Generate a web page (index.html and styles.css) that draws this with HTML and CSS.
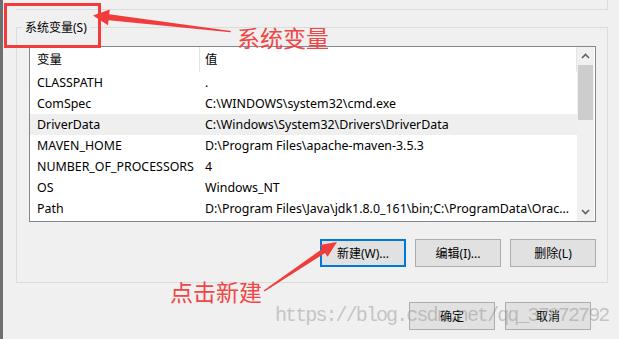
FILE: index.html
```html
<!DOCTYPE html>
<html lang="zh-CN">

<head>
    <meta charset="UTF-8">
    <meta name="viewport" content="width=device-width, initial-scale=1.0">
    <title>环境变量</title>
    <link rel="stylesheet" href="styles.css">
</head>

<body>
    <div class="screen">
        <div class="prev-group"></div>

        <fieldset class="group">
            <legend>系统变量(S)</legend>

            <div class="listbox">
                <div class="table">
                    <div class="row head"><span class="c1">变量</span><span class="c2">值</span></div>
                    <div class="row"><span class="c1">CLASSPATH</span><span class="c2">.</span></div>
                    <div class="row"><span class="c1">ComSpec</span><span class="c2">C:\WINDOWS\system32\cmd.exe</span></div>
                    <div class="row sel"><span class="c1">DriverData</span><span class="c2">C:\Windows\System32\Drivers\DriverData</span></div>
                    <div class="row"><span class="c1">MAVEN_HOME</span><span class="c2">D:\Program Files\apache-maven-3.5.3</span></div>
                    <div class="row"><span class="c1">NUMBER_OF_PROCESSORS</span><span class="c2">4</span></div>
                    <div class="row"><span class="c1">OS</span><span class="c2">Windows_NT</span></div>
                    <div class="row"><span class="c1">Path</span><span class="c2">D:\Program Files\Java\jdk1.8.0_161\bin;C:\ProgramData\Oracle\Java\javapath</span></div>
                </div>
                <div class="scrollbar">
                    <div class="sb-btn">
                        <svg width="17" height="17" viewBox="0 0 17 17"><polyline points="5,11 8.5,7.5 12,11" fill="none" stroke="#606060" stroke-width="1.6"/></svg>
                    </div>
                    <div class="sb-track"><div class="sb-thumb"></div></div>
                    <div class="sb-btn">
                        <svg width="17" height="17" viewBox="0 0 17 17"><polyline points="5,6 8.5,9.5 12,6" fill="none" stroke="#606060" stroke-width="1.6"/></svg>
                    </div>
                </div>
            </div>

            <div class="btn-row">
                <button class="btn focus">新建(W)...</button>
                <button class="btn">编辑(I)...</button>
                <button class="btn">删除(L)</button>
            </div>
        </fieldset>

        <div class="dialog-btns">
            <button class="btn">确定</button>
            <button class="btn">取消</button>
        </div>

        <!-- 标注：红框、箭头、文字 -->
        <svg class="marks" width="619" height="339" viewBox="0 0 619 339">
            <rect x="5.5" y="4.5" width="94" height="42" fill="none" stroke="#f23b3b" stroke-width="3"/>
            <polygon points="93,15.5 109.8,9.4 109.2,14.3 231,31 230.5,32.3 108.6,20.3 108,25.2" fill="#f23b3b"/>
            <polygon points="337,242 327.6,256.7 325.1,253 264.5,291.5 263.6,290.4 322.3,248.8 319.8,245.1" fill="#f23b3b"/>
        </svg>
        <span class="note note-top">系统变量</span>
        <span class="note note-bottom">点击新建</span>
        <span class="watermark">https://blog.csdn.net/qq_37872792</span>
    </div>
</body>

</html>
```

FILE: styles.css
```css
body {
    margin: 0;
    background: #f0f0f0;
    font-family: "Noto Sans", "Noto Sans CJK SC", sans-serif;
    font-size: 12px;
    color: #000;
}

.screen {
    position: relative;
    width: 619px;
    height: 339px;
    box-sizing: border-box;
    border-left: 3px solid #6f6f6f;
    overflow: hidden;
}

.prev-group {
    margin-left: 13px;
    width: 591px;
    height: 9px;
    border-bottom: 1px solid #dcdcdc;
    border-right: 1px solid #dcdcdc;
}

.group {
    margin: 9px 0 0 13px;
    width: 592px;
    box-sizing: border-box;
    border: 1px solid #dcdcdc;
    padding: 10px 11px 15px 12px;
    min-width: 0;
}

.group legend {
    margin-left: -7px;
    padding: 0 3px;
    height: 17px;
    line-height: 17px;
}

.listbox {
    display: flex;
    width: 567px;
    height: 176px;
    box-sizing: border-box;
    border: 1px solid #828790;
    background: #fff;
    font-size: 12.4px;
}

.table {
    width: 547px;
}

.row {
    display: flex;
    height: 21px;
    line-height: 21px;
}

.row.head {
    height: 25px;
    line-height: 25px;
}

.row.sel {
    background: #efefef;
}

.c1 {
    width: 170px;
    box-sizing: border-box;
    padding-left: 7px;
    white-space: nowrap;
}

.c2 {
    flex: 1;
    min-width: 0;
    padding-left: 5px;
    padding-right: 6px;
    white-space: nowrap;
    overflow: hidden;
    text-overflow: ellipsis;
}

.row.head .c1 {
    width: 170px;
    border-right: 1px solid #e5e5e5;
}

.row.head .c2 {
    border-right: 1px solid #e5e5e5;
}

.scrollbar {
    width: 17px;
    display: flex;
    flex-direction: column;
    background: #f0f0f0;
}

.sb-btn {
    height: 17px;
}

.sb-btn svg {
    display: block;
}

.sb-track {
    flex: 1;
}

.sb-thumb {
    margin: 1px 1px 0;
    height: 55px;
    background: #cdcdcd;
}

.btn-row {
    display: flex;
    justify-content: flex-end;
    gap: 9px;
    margin-top: 17px;
}

.btn {
    width: 86px;
    height: 28px;
    padding: 0;
    border: 1px solid #adadad;
    background: #e1e1e1;
    font-family: inherit;
    font-size: 12px;
    color: #000;
}

.btn.focus {
    border: 2px solid #0078d7;
}

.dialog-btns {
    display: flex;
    justify-content: flex-end;
    gap: 10px;
    margin: 19px 28px 0 0;
}

.marks {
    position: absolute;
    left: -3px;
    top: 0;
    pointer-events: none;
}

.note {
    position: absolute;
    font-family: "Noto Sans CJK SC", sans-serif;
    font-size: 23px;
    line-height: 23px;
    color: #f04646;
}

.note-top {
    left: 234px;
    top: 26px;
}

.note-bottom {
    left: 167px;
    top: 280px;
}

.watermark {
    position: absolute;
    left: 272px;
    top: 306px;
    font-family: "Liberation Mono", monospace;
    font-size: 20px;
    line-height: 20px;
    letter-spacing: -1.9px;
    color: rgba(140, 140, 140, 0.45);
    white-space: nowrap;
}
```
